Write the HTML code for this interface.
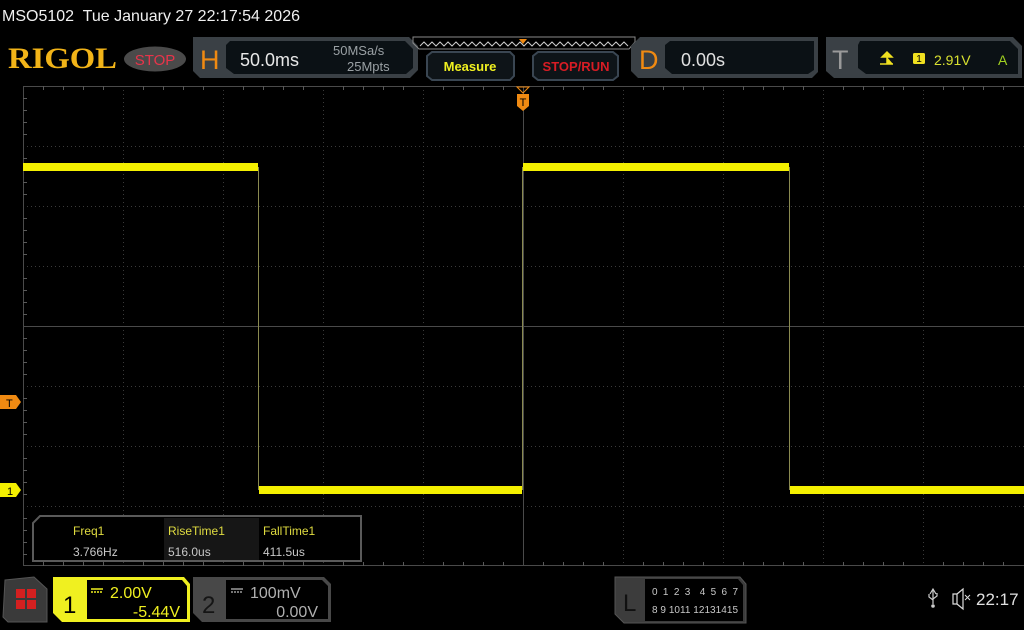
<!DOCTYPE html>
<html><head><meta charset="utf-8"><style>
html,body{margin:0;padding:0;background:#000;width:1024px;height:630px;overflow:hidden}
svg{display:block}
text{font-family:"Liberation Sans",sans-serif}
</style></head><body>
<svg width="1024" height="630" viewBox="0 0 1024 630" xmlns="http://www.w3.org/2000/svg">
<rect width="1024" height="630" fill="#000"/>
<text x="2" y="21" font-size="16" fill="#f0f0f0">MSO5102&#160; Tue January 27 22:17:54 2026</text>
<text x="8" y="68" style="font-family:'Liberation Serif',serif;font-weight:bold" font-size="30" fill="#f2b418" textLength="109" lengthAdjust="spacingAndGlyphs">RIGOL</text>
<ellipse cx="155" cy="59" rx="31" ry="12.5" fill="#4a4a4a"/>
<text x="155" y="65" font-size="15" fill="#e8344a" text-anchor="middle">STOP</text>
<polygon points="193,37 409,37 418,46 418,70 410,78 200,78 193,71" fill="#3a4045"/>
<polygon points="230,41 405,41 413,49 413,68 406,74 234,74 226,68 226,45" fill="#0b1115"/>
<text x="200" y="69" font-size="27" fill="#f08a12">H</text>
<text x="240" y="66" font-size="18" fill="#e8e8e8">50.0ms</text>
<text x="333" y="55" font-size="13" fill="#9aa0a4">50MSa/s</text>
<text x="347" y="71" font-size="13" fill="#9aa0a4">25Mpts</text>
<polygon points="413,37 635,37 635,42 629,49 419,49 413,43" fill="none" stroke="#8a8a8a" stroke-width="1"/>
<polyline points="420,46 424,42 428,46 432,42 436,46 440,42 444,46 448,42 452,46 456,42 460,46 464,42 468,46 472,42 476,46 480,42 484,46 488,42 492,46 496,42 500,46 504,42 508,46 512,42 516,46 520,42 524,46 528,42 532,46 536,42 540,46 544,42 548,46 552,42 556,46 560,42 564,46 568,42 572,46 576,42 580,46 584,42 588,46 592,42 596,46 600,42 604,46 608,42 612,46 616,42 620,46 624,42 628,46" fill="none" stroke="#ccc" stroke-width="1"/>
<polygon points="519,39 527,39 523,44" fill="#f08a12"/>
<polygon points="432,52 510,52 514,56 514,76 510,80 432,80 427,76 427,56" fill="#0e1418" stroke="#3a4652" stroke-width="2"/>
<text x="470" y="71" font-size="13" font-weight="bold" fill="#f0f020" text-anchor="middle">Measure</text>
<polygon points="538,52 613,52 618,56 618,76 613,80 538,80 533,76 533,56" fill="#0e1418" stroke="#3a4652" stroke-width="2"/>
<text x="576" y="71" font-size="13" font-weight="bold" fill="#d81c24" text-anchor="middle">STOP/RUN</text>
<polygon points="640,37 818,37 818,72 812,78 638,78 631,71 631,46" fill="#3a4045"/>
<polygon points="670,41 814,41 814,70 808,74 672,74 665,68 665,45" fill="#0b1115"/>
<text x="639" y="69" font-size="27" fill="#f08a12">D</text>
<text x="681" y="66" font-size="18" fill="#e0e0e0">0.00s</text>
<polygon points="826,37 1013,37 1022,46 1022,78 834,78 826,71" fill="#3a4045"/>
<polygon points="860,41 1010,41 1018,49 1018,74 866,74 858,68 858,45" fill="#0b1115"/>
<text x="832" y="69" font-size="27" fill="#9a9a9a">T</text>
<path d="M882,57 L887,52 L892,57 Z M887,57 L887,64 L893,64 M880,64 L887,64" stroke="#f0e020" stroke-width="1.5" fill="#f0e020"/>
<rect x="913" y="53" width="12" height="11" rx="1.5" fill="#f0e020"/>
<text x="919" y="62" font-size="10" fill="#000" text-anchor="middle">1</text>
<text x="934" y="65" font-size="14" fill="#d8e030">2.91V</text>
<text x="998" y="65" font-size="14" fill="#a0d020">A</text>
<g stroke="#3a3a3a" stroke-width="1" stroke-dasharray="1,3">
<line x1="123.5" y1="86" x2="123.5" y2="566"/><line x1="223.5" y1="86" x2="223.5" y2="566"/><line x1="323.5" y1="86" x2="323.5" y2="566"/><line x1="423.5" y1="86" x2="423.5" y2="566"/><line x1="623.5" y1="86" x2="623.5" y2="566"/><line x1="723.5" y1="86" x2="723.5" y2="566"/><line x1="823.5" y1="86" x2="823.5" y2="566"/><line x1="923.5" y1="86" x2="923.5" y2="566"/>
<line x1="23" y1="146.5" x2="1024" y2="146.5"/><line x1="23" y1="206.5" x2="1024" y2="206.5"/><line x1="23" y1="266.5" x2="1024" y2="266.5"/><line x1="23" y1="386.5" x2="1024" y2="386.5"/><line x1="23" y1="446.5" x2="1024" y2="446.5"/><line x1="23" y1="506.5" x2="1024" y2="506.5"/>
</g>
<g stroke="#4a4a4a" stroke-width="1">
<line x1="523.5" y1="86" x2="523.5" y2="566"/><line x1="23" y1="326.5" x2="1024" y2="326.5"/>
<line x1="23.5" y1="86" x2="23.5" y2="566"/><line x1="23" y1="86.5" x2="1024" y2="86.5"/><line x1="23" y1="565.5" x2="1024" y2="565.5"/>
</g>
<g stroke="#5a5a5a" stroke-width="1">
<path d="M43.5,86v4M63.5,86v4M83.5,86v4M103.5,86v4M143.5,86v4M163.5,86v4M183.5,86v4M203.5,86v4M243.5,86v4M263.5,86v4M283.5,86v4M303.5,86v4M343.5,86v4M363.5,86v4M383.5,86v4M403.5,86v4M443.5,86v4M463.5,86v4M483.5,86v4M503.5,86v4M543.5,86v4M563.5,86v4M583.5,86v4M603.5,86v4M643.5,86v4M663.5,86v4M683.5,86v4M703.5,86v4M743.5,86v4M763.5,86v4M783.5,86v4M803.5,86v4M843.5,86v4M863.5,86v4M883.5,86v4M903.5,86v4M943.5,86v4M963.5,86v4M983.5,86v4M1003.5,86v4"/>
<path d="M43.5,566v-4M63.5,566v-4M83.5,566v-4M103.5,566v-4M143.5,566v-4M163.5,566v-4M183.5,566v-4M203.5,566v-4M243.5,566v-4M263.5,566v-4M283.5,566v-4M303.5,566v-4M343.5,566v-4M363.5,566v-4M383.5,566v-4M403.5,566v-4M443.5,566v-4M463.5,566v-4M483.5,566v-4M503.5,566v-4M543.5,566v-4M563.5,566v-4M583.5,566v-4M603.5,566v-4M643.5,566v-4M663.5,566v-4M683.5,566v-4M703.5,566v-4M743.5,566v-4M763.5,566v-4M783.5,566v-4M803.5,566v-4M843.5,566v-4M863.5,566v-4M883.5,566v-4M903.5,566v-4M943.5,566v-4M963.5,566v-4M983.5,566v-4M1003.5,566v-4"/>
<path d="M23,98.5h4M23,110.5h4M23,122.5h4M23,134.5h4M23,158.5h4M23,170.5h4M23,182.5h4M23,194.5h4M23,218.5h4M23,230.5h4M23,242.5h4M23,254.5h4M23,278.5h4M23,290.5h4M23,302.5h4M23,314.5h4M23,338.5h4M23,350.5h4M23,362.5h4M23,374.5h4M23,398.5h4M23,410.5h4M23,422.5h4M23,434.5h4M23,458.5h4M23,470.5h4M23,482.5h4M23,494.5h4M23,518.5h4M23,530.5h4M23,542.5h4M23,554.5h4"/>
</g>
<g fill="#f4f000">
<rect x="23" y="163" width="235" height="8"/>
<rect x="259" y="486" width="263" height="8"/>
<rect x="523" y="163" width="266" height="8"/>
<rect x="790" y="486" width="234" height="8"/>
</g>
<g stroke="#8a8a50" stroke-width="1">
<line x1="258.5" y1="167" x2="258.5" y2="490"/><line x1="522.5" y1="167" x2="522.5" y2="490"/><line x1="789.5" y1="167" x2="789.5" y2="490"/>
</g>
<polygon points="517,87 529,87 523,93" fill="none" stroke="#f08a12"/>
<polygon points="517,94 529,94 529,106 523,111 517,106" fill="#f08a12"/>
<text x="523" y="106" font-size="11" fill="#000" text-anchor="middle">T</text>
<polygon points="0,395 16,395 21,402 16,409 0,409" fill="#f08a12"/>
<text x="6" y="407" font-size="11" fill="#000">T</text>
<polygon points="0,483 16,483 21,490 16,497 0,497" fill="#f4f000"/>
<text x="7" y="495" font-size="11" fill="#000">1</text>
<polygon points="40,516 361,516 361,561 33,561 33,523" fill="#000" stroke="#5a5a5a" stroke-width="2"/>
<rect x="164" y="518" width="95" height="42" fill="#161616"/>
<text x="73" y="535" font-size="12" fill="#e0dc40">Freq1</text>
<text x="168" y="535" font-size="12" fill="#e0dc40">RiseTime1</text>
<text x="263" y="535" font-size="12" fill="#e0dc40">FallTime1</text>
<text x="73" y="556" font-size="12" fill="#c8c8c8">3.766Hz</text>
<text x="168" y="556" font-size="12" fill="#c8c8c8">516.0us</text>
<text x="263" y="556" font-size="12" fill="#c8c8c8">411.5us</text>
<polygon points="5,580 34,577 47,589 47,622 8,622 3,617" fill="#3a3a3a" stroke="#555" stroke-width="1"/>
<g fill="#d42020"><rect x="16" y="589" width="9" height="9"/><rect x="27" y="589" width="9" height="9"/><rect x="16" y="600" width="9" height="9"/><rect x="27" y="600" width="9" height="9"/></g>
<polygon points="53,577 184,577 190,584 190,622 62,622 53,613" fill="#f0f020"/>
<polygon points="87,580 182,580 187,586 187,619 87,619" fill="#000"/>
<text x="63" y="613" font-size="24" fill="#000">1</text>
<path d="M91,589h12M91,592h2M94,592h2M97,592h2M100,592h2" stroke="#f0f020" stroke-width="1.5"/>
<text x="110" y="598" font-size="16" fill="#f0f020">2.00V</text>
<text x="180" y="617" font-size="16" fill="#f0f020" text-anchor="end">-5.44V</text>
<polygon points="193,577 324,577 331,584 331,622 202,622 193,613" fill="#484848"/>
<polygon points="226,580 322,580 328,586 328,619 226,619" fill="#000"/>
<text x="202" y="613" font-size="24" fill="#151515">2</text>
<path d="M231,589h12M231,592h2M234,592h2M237,592h2M240,592h2" stroke="#9a9a9a" stroke-width="1.5"/>
<text x="250" y="598" font-size="16" fill="#b0b0b0">100mV</text>
<text x="318" y="617" font-size="16" fill="#b0b0b0" text-anchor="end">0.00V</text>
<polygon points="615,577 740,577 746,584 746,623 624,623 615,614" fill="#3c3c3c" stroke="#555"/>
<polygon points="645,579 738,579 743,585 743,621 645,621" fill="#000"/>
<text x="623" y="611" font-size="24" fill="#111">L</text>
<text x="652" y="595" font-size="10" fill="#c8c8c8" textLength="86" xml:space="preserve">0 1 2 3  4 5 6 7</text>
<text x="652" y="613" font-size="10" fill="#c8c8c8" textLength="86">8 9 1011 12131415</text>
<path d="M933,589v15M930,594l3,-5 3,5M929,594v3l4,3M937,593v3l-4,3" stroke="#ccc" stroke-width="1.2" fill="none"/>
<circle cx="933" cy="606" r="1.8" fill="#ccc"/>
<path d="M953,594h4l6,-5v20l-6,-5h-4z M957,594v10" stroke="#ddd" stroke-width="1.2" fill="none"/>
<path d="M965,595l5,5M970,595l-5,5" stroke="#ddd" stroke-width="1"/>
<text x="976" y="605" font-size="17" fill="#e0e0e0">22:17</text>
</svg>
</body></html>
